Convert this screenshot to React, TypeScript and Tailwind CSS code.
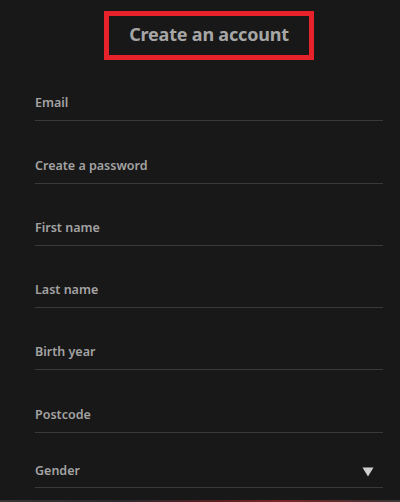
import type { ReactElement } from 'react'

type Field = {
  label: string
  height: string
  select?: boolean
}

const fields: Field[] = [
  { label: 'Email', height: 'h-[61px]' },
  { label: 'Create a password', height: 'h-[63px]' },
  { label: 'First name', height: 'h-[62px]' },
  { label: 'Last name', height: 'h-[62px]' },
  { label: 'Birth year', height: 'h-[62px]' },
  { label: 'Postcode', height: 'h-[63px]' },
  { label: 'Gender', height: 'h-[55px]', select: true },
]

function FieldRow({ field }: { field: Field }): ReactElement {
  return (
    <div className={`${field.height} flex items-end border-b border-[#3a3a3a]`}>
      <div className={`flex w-full items-center justify-between ${field.select ? 'pb-[8px]' : 'pb-[9px]'}`}>
        <span className="text-[12.5px] font-semibold leading-4 text-[#a3a3a3]">{field.label}</span>
        {field.select ? (
          <svg width="12" height="10" viewBox="0 0 12 10" className="mr-[9px] mt-[2px]">
            <path d="M0.5 0.5 L11.5 0.5 L6 9.5 Z" fill="#cfcfcf" />
          </svg>
        ) : null}
      </div>
    </div>
  )
}

export default function App(): ReactElement {
  return (
    <div className="flex h-[502px] w-[400px] flex-col overflow-hidden bg-[#181818] font-['Noto_Sans',sans-serif]">
      <div className="flex pl-[104px] pt-[11px]">
        <div className="flex h-[49px] w-[210px] items-center justify-center border-[5px] border-[#e8222b] pb-[3px]">
          <h1 className="text-[18px] font-bold tracking-[-0.2px] text-[#a6a6a6]">Create an account</h1>
        </div>
      </div>
      <div className="ml-[35px] mr-[17px] flex flex-col">
        {fields.map((f) => (
          <FieldRow key={f.label} field={f} />
        ))}
      </div>
      <div className="mt-auto h-[2px] bg-[linear-gradient(90deg,#3a3535_0%,#2a2a30_30%,#5a2020_55%,#7a2525_70%,#3a3535_100%)]" />
    </div>
  )
}
